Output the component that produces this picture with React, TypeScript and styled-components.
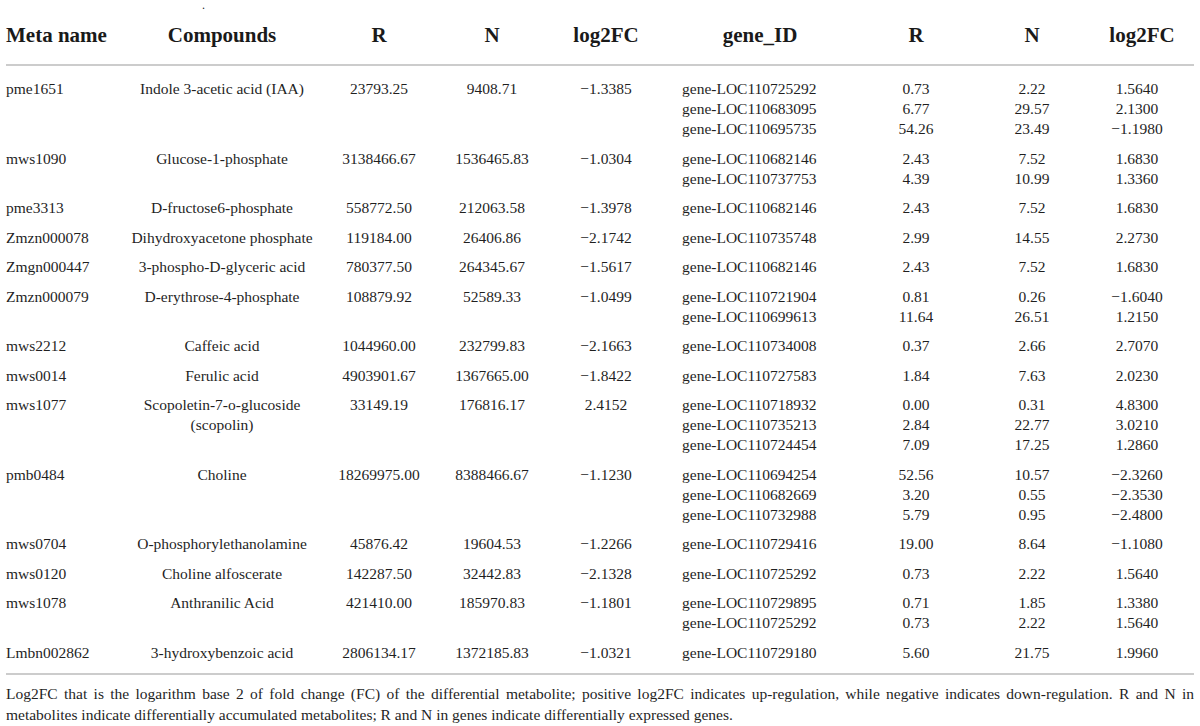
import React from "react";
import styled, { createGlobalStyle } from "styled-components";

const Global = createGlobalStyle`
  html, body { margin: 0; padding: 0; background: #ffffff; }
  body { font-family: "Liberation Serif", "Times New Roman", serif; color: #1f1f1f; }
`;

type Gene = [string, string, string, string];
interface Row {
  meta: string;
  comp: string[];
  r: string;
  n: string;
  fc: string;
  genes: Gene[];
}

const rows: Row[] = [
  { meta: "pme1651", comp: ["Indole 3-acetic acid (IAA)"], r: "23793.25", n: "9408.71", fc: "−1.3385", genes: [["gene-LOC110725292", "0.73", "2.22", "1.5640"], ["gene-LOC110683095", "6.77", "29.57", "2.1300"], ["gene-LOC110695735", "54.26", "23.49", "−1.1980"]] },
  { meta: "mws1090", comp: ["Glucose-1-phosphate"], r: "3138466.67", n: "1536465.83", fc: "−1.0304", genes: [["gene-LOC110682146", "2.43", "7.52", "1.6830"], ["gene-LOC110737753", "4.39", "10.99", "1.3360"]] },
  { meta: "pme3313", comp: ["D-fructose6-phosphate"], r: "558772.50", n: "212063.58", fc: "−1.3978", genes: [["gene-LOC110682146", "2.43", "7.52", "1.6830"]] },
  { meta: "Zmzn000078", comp: ["Dihydroxyacetone phosphate"], r: "119184.00", n: "26406.86", fc: "−2.1742", genes: [["gene-LOC110735748", "2.99", "14.55", "2.2730"]] },
  { meta: "Zmgn000447", comp: ["3-phospho-D-glyceric acid"], r: "780377.50", n: "264345.67", fc: "−1.5617", genes: [["gene-LOC110682146", "2.43", "7.52", "1.6830"]] },
  { meta: "Zmzn000079", comp: ["D-erythrose-4-phosphate"], r: "108879.92", n: "52589.33", fc: "−1.0499", genes: [["gene-LOC110721904", "0.81", "0.26", "−1.6040"], ["gene-LOC110699613", "11.64", "26.51", "1.2150"]] },
  { meta: "mws2212", comp: ["Caffeic acid"], r: "1044960.00", n: "232799.83", fc: "−2.1663", genes: [["gene-LOC110734008", "0.37", "2.66", "2.7070"]] },
  { meta: "mws0014", comp: ["Ferulic acid"], r: "4903901.67", n: "1367665.00", fc: "−1.8422", genes: [["gene-LOC110727583", "1.84", "7.63", "2.0230"]] },
  { meta: "mws1077", comp: ["Scopoletin-7-o-glucoside", "(scopolin)"], r: "33149.19", n: "176816.17", fc: "2.4152", genes: [["gene-LOC110718932", "0.00", "0.31", "4.8300"], ["gene-LOC110735213", "2.84", "22.77", "3.0210"], ["gene-LOC110724454", "7.09", "17.25", "1.2860"]] },
  { meta: "pmb0484", comp: ["Choline"], r: "18269975.00", n: "8388466.67", fc: "−1.1230", genes: [["gene-LOC110694254", "52.56", "10.57", "−2.3260"], ["gene-LOC110682669", "3.20", "0.55", "−2.3530"], ["gene-LOC110732988", "5.79", "0.95", "−2.4800"]] },
  { meta: "mws0704", comp: ["O-phosphorylethanolamine"], r: "45876.42", n: "19604.53", fc: "−1.2266", genes: [["gene-LOC110729416", "19.00", "8.64", "−1.1080"]] },
  { meta: "mws0120", comp: ["Choline alfoscerate"], r: "142287.50", n: "32442.83", fc: "−2.1328", genes: [["gene-LOC110725292", "0.73", "2.22", "1.5640"]] },
  { meta: "mws1078", comp: ["Anthranilic Acid"], r: "421410.00", n: "185970.83", fc: "−1.1801", genes: [["gene-LOC110729895", "0.71", "1.85", "1.3380"], ["gene-LOC110725292", "0.73", "2.22", "1.5640"]] },
  { meta: "Lmbn002862", comp: ["3-hydroxybenzoic acid"], r: "2806134.17", n: "1372185.83", fc: "−1.0321", genes: [["gene-LOC110729180", "5.60", "21.75", "1.9960"]] },
];

const colWidths = [124, 184, 130, 96, 132, 176, 136, 96, 114];

const Page = styled.div`
  width: 1188px;
  padding: 0 6px;
`;

const Mark = styled.div`
  height: 14px;
  padding-left: 196px;
  font-size: 12px;
  line-height: 10px;
`;

const Table = styled.table`
  width: 1188px;
  border-collapse: collapse;
  table-layout: fixed;
`;

const Head = styled.th<{ $align?: "left" | "center"; $shift?: number }>`
  font-size: 21px;
  font-weight: 700;
  line-height: 24px;
  text-align: ${(p) => p.$align ?? "center"};
  padding: 9px 0 17px ${(p) => p.$shift ?? 0}px;
  border-bottom: 2px solid #cccccc;
  color: #1a1a1a;
  white-space: nowrap;
`;

const Body = styled.tbody`
  tr:first-child td { padding-top: 13px; }
  tr:last-child td { padding-bottom: 10px; border-bottom: 2px solid #cccccc; }
`;

const Cell = styled.td<{ $align?: "left" | "center"; $indent?: number }>`
  font-size: 15.5px;
  line-height: 20px;
  vertical-align: top;
  padding: 4.75px 0 4.75px ${(p) => p.$indent ?? 0}px;
  text-align: ${(p) => p.$align ?? "center"};
  white-space: nowrap;
  color: #1f1f1f;
`;

const Line = styled.div`
  height: 20px;
`;

const Note = styled.p`
  margin: 8px 0 0;
  font-size: 15.5px;
  line-height: 21px;
  text-align: justify;
  color: #1f1f1f;
`;

const Lines: React.FC<{ items: string[] }> = ({ items }) => (
  <>
    {items.map((t, i) => (
      <Line key={i}>{t}</Line>
    ))}
  </>
);

export default function App() {
  return (
    <Page>
      <Global />
      <Mark>.</Mark>
      <Table>
        <colgroup>
          {colWidths.map((w, i) => (
            <col key={i} style={{ width: w }} />
          ))}
        </colgroup>
        <thead>
          <tr>
            <Head $align="left">Meta name</Head>
            <Head>Compounds</Head>
            <Head>R</Head>
            <Head>N</Head>
            <Head>log2FC</Head>
            <Head>gene_ID</Head>
            <Head>R</Head>
            <Head>N</Head>
            <Head $shift={10}>log2FC</Head>
          </tr>
        </thead>
        <Body>
          {rows.map((row) => (
            <tr key={row.meta}>
              <Cell $align="left">{row.meta}</Cell>
              <Cell>
                <Lines items={row.comp} />
              </Cell>
              <Cell>{row.r}</Cell>
              <Cell>{row.n}</Cell>
              <Cell>{row.fc}</Cell>
              <Cell $align="left" $indent={10}>
                <Lines items={row.genes.map((g) => g[0])} />
              </Cell>
              <Cell>
                <Lines items={row.genes.map((g) => g[1])} />
              </Cell>
              <Cell>
                <Lines items={row.genes.map((g) => g[2])} />
              </Cell>
              <Cell>
                <Lines items={row.genes.map((g) => g[3])} />
              </Cell>
            </tr>
          ))}
        </Body>
      </Table>
      <Note>
        Log2FC that is the logarithm base 2 of fold change (FC) of the differential metabolite; positive log2FC
        indicates up-regulation, while negative indicates down-regulation. R and N in metabolites indicate
        differentially accumulated metabolites; R and N in genes indicate differentially expressed genes.
      </Note>
    </Page>
  );
}
